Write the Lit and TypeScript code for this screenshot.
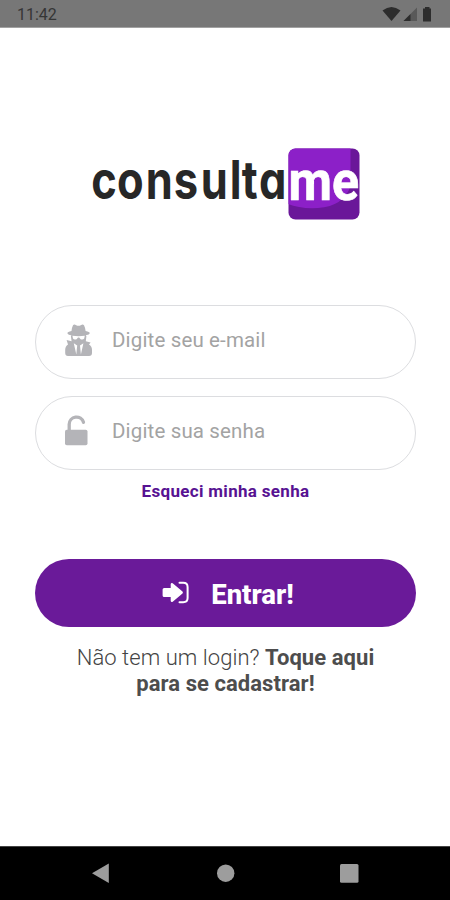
import { LitElement, html, css, svg } from "lit";
import { customElement } from "lit/decorators.js";

const spyIcon = svg`<svg class="spy" width="30" height="34" viewBox="0 0 30 34">
  <path fill="#b4b4b8" d="M9 2.2C10 1.2 11 1.6 12.2 2.2Q14.5 3.4 16.8 2.2C18 1.6 19 1.2 20 2.2Q21 4 21.6 8Q25.8 9 25.8 10.2Q25.5 11.5 21.8 12.3L22.4 13.2L21.8 18.2L26.6 19.4L25 21.5Q28 23 28 27V30Q28 33 25 33H4Q1.200 33 1.200 30V27Q1.200 23 4 21.500L2.600 17L7.600 18.200L6.900 13.200L7.400 12.300Q3.600 11.500 3.400 10.200Q3.400 9 7.500 8Q8 4 9 2.200Z"/>
  <path fill="#fff" d="M8.400 12.800Q14.600 13.700 20.800 12.800L20.200 15.500Q19 17 16.600 16.200L15.200 14.600H14L12.600 16.200Q10 17 9 15.500ZM9.800 20.300L13.200 22.500L12.300 31.500ZM19.400 20.300L16 22.500L16.900 31.500Z"/>
</svg>`;

const lockIcon = svg`<svg width="26" height="34" viewBox="0 0 26 34">
  <path fill="none" stroke="#b4b4b8" stroke-width="3.300" stroke-linecap="round" d="M5.200 17V10.300a7.300 7.300 0 0 1 14.300-2"/>
  <rect x="1" y="15.800" width="22.500" height="15.400" rx="1.800" fill="#b4b4b8"/>
</svg>`;

const enterIcon = svg`<svg width="28" height="24" viewBox="0 0 28 24">
  <path fill="none" stroke="#fff" stroke-width="2" stroke-linecap="round" d="M17.500 1.800H21.200Q25.600 1.800 25.600 6V17Q25.600 21.200 21.200 21.200H17.500"/>
  <path fill="#fff" d="M.6 8.500Q.6 7 2.200 7H8.700V3Q9.200 1.300 10.700 2.300L20.500 10.500Q21.400 11.500 20.500 12.500L10.700 20.700Q9.200 21.700 8.700 20V16H2.200Q.6 16 .6 14.500Z"/>
</svg>`;

const logo = svg`<svg class="logo" width="270" height="72" viewBox="0 0 270 72">
  <defs><clipPath id="tile"><rect x="198.500" y="0.500" width="71" height="71" rx="7"/></clipPath></defs>
  <g clip-path="url(#tile)">
    <rect x="198" y="0" width="72" height="72" fill="#6a1799"/>
    <path fill="#8c20c8" d="M198 0H260.500V38Q254 58 228 60Q210 61 198 56Z"/>
  </g>
  <text class="word" y="51.500" x="1.500 33 68 102 135 170.500 185 206" transform="scale(.82 1)">consulta</text>
  <text class="me" x="198.500" y="51.500" textLength="70.500" lengthAdjust="spacingAndGlyphs">me</text>
</svg>`;

@customElement("app-root")
export class AppRoot extends LitElement {
  static styles = css`
    :host {
      display: flex;
      flex-direction: column;
      width: 450px;
      height: 900px;
      overflow: hidden;
      background: #fff;
      font-family: Roboto, "Liberation Sans", sans-serif;
    }
    svg { display: block; flex: none; }
    .status {
      box-sizing: border-box;
      height: 28px;
      flex: none;
      display: flex;
      justify-content: space-between;
      padding: 0 14px 0 17px;
      background: #777;
      border-bottom: 1px solid #a2a2a2;
      color: #353535;
      font-size: 16px;
      line-height: 30px;
    }
    main {
      flex: 1;
      display: flex;
      flex-direction: column;
      align-items: center;
      padding: 0 34px 0 35px;
    }
    .logo { margin: 120px 1px 85px 0; overflow: visible; }
    .word {
      font-family: Inter, sans-serif;
      font-weight: 700;
      font-size: 53px;
      font-feature-settings: "cv11";
      fill: #272727;
    }
    .me { font-weight: 700; font-size: 55px; fill: #fff; stroke: #fff; stroke-width: 0.700px; }
    .field {
      box-sizing: border-box;
      width: 381px;
      height: 74px;
      display: flex;
      align-items: center;
      border: 1px solid #dcdde0;
      border-radius: 37px;
      padding-left: 28px;
      margin-bottom: 17px;
      color: #a3a3a3;
      font-size: 20.500px;
      font-weight: 400;
    }
    .icon { width: 48px; padding-bottom: 4px; }
    .field span { padding-bottom: 4px; letter-spacing: 0.150px; }
    .forgot {
      margin-top: -6px;
      height: 20px;
      line-height: 20px;
      font-size: 17px;
      font-weight: 700;
      color: #571292;
      letter-spacing: 0.320px;
    }
    .enter {
      box-sizing: border-box;
      width: 381px;
      height: 68px;
      margin-top: 58px;
      padding-left: 5px;
      border-radius: 34px;
      background: #6a1a99;
      color: #fff;
      display: flex;
      align-items: center;
      justify-content: center;
      gap: 21px;
      font-size: 27.500px;
      font-weight: 800;
    }
    .enter span { padding-top: 2px; }
    .signup {
      margin: 18px 0 0;
      text-align: center;
      font-size: 22px;
      line-height: 26px;
      color: #444;
      font-weight: 300;
      letter-spacing: 0.060px;
    }
    .signup b { font-weight: 700; color: #4d4d4d; }
    .nav {
      box-sizing: border-box;
      height: 54px;
      flex: none;
      background: #000;
      border-top: 1px solid #444;
    }
  `;

  render() {
    return html`
      <header class="status">
        <span class="time">11:42</span>
        <svg width="54" height="27" viewBox="0 0 54 27" fill="#2d2d2d">
          <path d="M.5 10.500Q9.500 3.500 18.500 10.500L9.500 21Z"/>
          <path fill="#595959" d="M35 7.500V21H21.500Z"/>
          <path d="M28.500 14V21H21.500Z"/>
          <path d="M41 8.500H43V7H47.500V8.500H49V21.500H41Z"/>
        </svg>
      </header>
      <main>
        ${logo}
        <div class="field"><div class="icon">${spyIcon}</div><span>Digite seu e-mail</span></div>
        <div class="field"><div class="icon">${lockIcon}</div><span>Digite sua senha</span></div>
        <div class="forgot">Esqueci minha senha</div>
        <div class="enter">${enterIcon}<span>Entrar!</span></div>
        <p class="signup">Não tem um login? <b>Toque aqui<br />para se cadastrar!</b></p>
      </main>
      <footer class="nav">
        <svg width="450" height="53" viewBox="0 847 450 53" fill="#9d9d9d">
          <path d="M92 873.200L108.800 863.500V883Z"/>
          <circle cx="225.700" cy="873.200" r="8.700"/>
          <rect x="340" y="864" width="18.500" height="18.800" rx="1.500"/>
        </svg>
      </footer>
    `;
  }
}
